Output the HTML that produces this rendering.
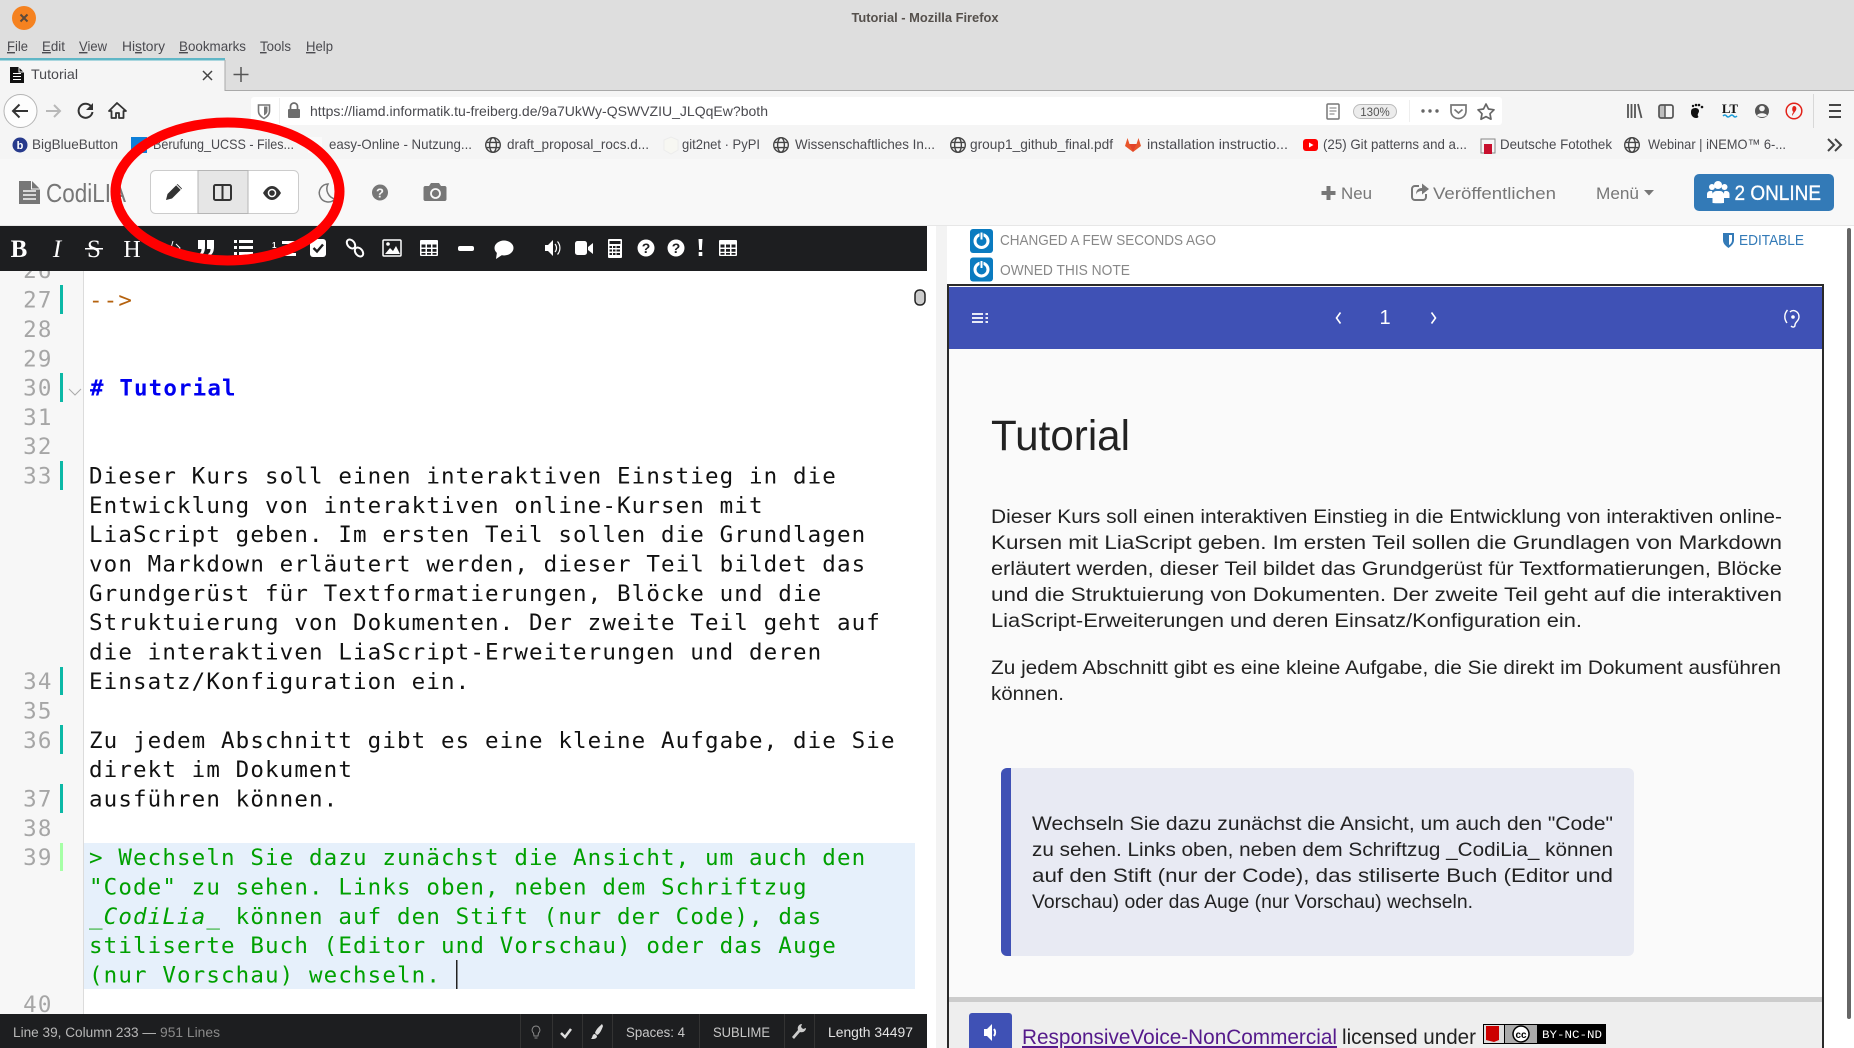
<!DOCTYPE html>
<html><head><meta charset="utf-8"><title>Tutorial - Mozilla Firefox</title>
<style>
html,body{margin:0;padding:0;background:#fff;width:1854px;height:1048px;overflow:hidden}
svg{display:block;position:absolute;left:0;top:0}
text{font-family:"Liberation Sans",sans-serif;white-space:pre}
text.serif{font-family:"Liberation Serif",serif}
text.mono{font-family:"Liberation Mono",monospace}
.ui{font-size:14px;fill:#4a4a4f}
.m{font-family:"DejaVu Sans Mono","Liberation Mono",monospace;font-size:22.5px;letter-spacing:1.12px;fill:#111}
.n{font-family:"DejaVu Sans Mono","Liberation Mono",monospace;font-size:22.5px;letter-spacing:1.12px;fill:#a6a6a6;text-anchor:end}
.p{font-size:19.5px;fill:#222}
.st{font-size:13.5px;fill:#b8b8b8}
</style></head><body>
<svg width="1854" height="1048" viewBox="0 0 1854 1048" xmlns="http://www.w3.org/2000/svg">
<defs>
<g id="globe" fill="none" stroke="#454545" stroke-width="1.4"><circle r="7.3"/><ellipse rx="3.4" ry="7.3"/><path d="M-7 -2.6H7M-7 2.6H7"/></g>
<g id="tbl" fill="#fff"><path fill-rule="evenodd" d="M-8-8H8a1 1 0 0 1 1 1V7a1 1 0 0 1-1 1H-8a1 1 0 0 1-1-1V-7a1 1 0 0 1 1-1zM-7.5-3.5v3h4v-3zm5.500 0v3h4v-3zm5.500 0v3h4v-3zM-7.5 1v2.800h4V1zm5.500 0v2.800h4V1zm5.500 0v2.800h4V1zM-7.500 5v1.800h4V5zm5.500 0v1.800h4V5zm5.500 0v1.800h4V5z"/></g>
<g id="powb"><rect x="-11.500" y="-12" width="23" height="24" rx="3" fill="#0a7bc0"/><circle r="6.500" fill="none" stroke="#fff" stroke-width="3"/><rect x="-1.500" y="-9" width="3" height="8" fill="#fff" stroke="#0a7bc0" stroke-width="1"/></g>
</defs>

<!-- browser chrome -->
<rect width="1854" height="91" fill="#dedede"/>
<rect y="90" width="1854" height="1" fill="#a9a9a9"/>
<text x="925" y="22" text-anchor="middle" textLength="147" lengthAdjust="spacingAndGlyphs" font-size="13" font-weight="700" fill="#55504c">Tutorial - Mozilla Firefox</text>
<ellipse cx="24" cy="18" rx="12" ry="12" fill="#f58220"/>
<path d="M20.500 14.500l7 7M27.500 14.500l-7 7" stroke="#5c4a3a" stroke-width="2"/>
<text class="ui" x="7" y="51" textLength="21" lengthAdjust="spacingAndGlyphs"><tspan text-decoration="underline">F</tspan>ile</text>
<text class="ui" x="42" y="51" textLength="23" lengthAdjust="spacingAndGlyphs"><tspan text-decoration="underline">E</tspan>dit</text>
<text class="ui" x="79" y="51" textLength="28" lengthAdjust="spacingAndGlyphs"><tspan text-decoration="underline">V</tspan>iew</text>
<text class="ui" x="122" y="51" textLength="43" lengthAdjust="spacingAndGlyphs">Hi<tspan text-decoration="underline">s</tspan>tory</text>
<text class="ui" x="179" y="51" textLength="67" lengthAdjust="spacingAndGlyphs"><tspan text-decoration="underline">B</tspan>ookmarks</text>
<text class="ui" x="260" y="51" textLength="31" lengthAdjust="spacingAndGlyphs"><tspan text-decoration="underline">T</tspan>ools</text>
<text class="ui" x="306" y="51" textLength="27" lengthAdjust="spacingAndGlyphs"><tspan text-decoration="underline">H</tspan>elp</text>
<!-- tab -->
<rect x="0" y="58" width="225" height="33" fill="#f5f5f5"/>
<rect x="0" y="58" width="225" height="2.500" fill="#5fb6c6"/>
<rect x="224.500" y="60" width="1" height="31" fill="#a9a9a9"/>
<path d="M10 67h8.500l5.500 5.500V83H10z" fill="#111"/><path d="M13 73.500h8M13 76.500h8M13 79.500h8" stroke="#fff" stroke-width="1"/><path d="M19 67v5h5" fill="none" stroke="#f5f5f5" stroke-width="1"/>
<text class="ui" x="31" y="79" textLength="47" lengthAdjust="spacingAndGlyphs" fill="#333">Tutorial</text>
<path d="M203 71l9 9M212 71l-9 9" stroke="#444" stroke-width="1.500"/>
<path d="M241 67v15M233.500 74.500h15" stroke="#555" stroke-width="1.500"/>
<!-- nav bar -->
<rect y="91" width="1854" height="35" fill="#f5f5f5"/>
<rect y="126" width="1854" height="33" fill="#f5f5f5"/>
<circle cx="20.500" cy="111" r="16.500" fill="#fdfdfd" stroke="#b5b5b5" stroke-width="1"/>
<path d="M28 111H13M19.500 104.500L13 111l6.500 6.500" fill="none" stroke="#333" stroke-width="2"/>
<path d="M46 111h14M54 105l6 6-6 6" fill="none" stroke="#b8b8b8" stroke-width="2"/>
<path d="M91.500 107a7 7 0 1 0 1 5" fill="none" stroke="#333" stroke-width="2"/><path d="M93 103v7h-7z" fill="#333"/>
<path d="M117 103l-8 8h2.500v7h4.500v-5h3v5h4.500v-7h2.500z" fill="none" stroke="#333" stroke-width="1.800" stroke-linejoin="round"/>
<rect x="251" y="97" width="1251" height="28" rx="3" fill="#fff"/>
<rect x="279" y="98" width="1" height="26" fill="#eee"/>
<path d="M258.500 105h11v6c0 4-3 6-5.500 7.500-2.500-1.500-5.500-3.500-5.500-7.500z" fill="none" stroke="#777" stroke-width="1.600"/><path d="M264 106.500h3.500v4.500c0 2-1.500 3.500-3.500 4.500z" fill="#777"/>
<rect x="288" y="109" width="12" height="9" rx="1" fill="#6d6d6d"/><path d="M290.500 109v-2.500a3.500 3.500 0 0 1 7 0V109" fill="none" stroke="#6d6d6d" stroke-width="1.700"/>
<text class="ui" x="310" y="116" textLength="458" lengthAdjust="spacingAndGlyphs" fill="#333">https://liamd.informatik.tu-freiberg.de/9a7UkWy-QSWVZIU_JLQqEw?both</text>
<rect x="1327" y="104" width="12" height="15" rx="1" fill="none" stroke="#777" stroke-width="1.500"/><path d="M1329.500 108h7M1329.500 111h7M1329.500 114h5" stroke="#777" stroke-width="1"/>
<rect x="1353.500" y="104.500" width="43" height="14" rx="7" fill="#ececec" stroke="#bbb"/>
<text x="1375" y="116" text-anchor="middle" font-size="11.500" fill="#555">130%</text>
<rect x="1409" y="100" width="1" height="22" fill="#eee"/>
<circle cx="1423" cy="111" r="1.700" fill="#666"/><circle cx="1430" cy="111" r="1.700" fill="#666"/><circle cx="1437" cy="111" r="1.700" fill="#666"/>
<path d="M1451 105h15v6c0 4.500-3.500 7.500-7.500 7.500s-7.500-3-7.500-7.500z" fill="none" stroke="#777" stroke-width="1.700"/><path d="M1454.500 109.500l4 3.500 4-3.500" fill="none" stroke="#777" stroke-width="1.700"/>
<path d="M1486 104l2.500 5 5.500.8-4 3.900 1 5.500-5-2.600-5 2.600 1-5.500-4-3.900 5.500-.8z" fill="none" stroke="#666" stroke-width="1.700" stroke-linejoin="round"/>
<path d="M1628 104v14M1631.500 104v14M1635 104v14M1638 104l3.500 14" stroke="#555" stroke-width="1.800" fill="none"/>
<rect x="1659" y="105" width="14" height="13" rx="2" fill="none" stroke="#555" stroke-width="1.700"/><rect x="1659" y="105" width="6" height="13" fill="#555" opacity=".35"/><path d="M1665 105v13" stroke="#555" stroke-width="1.500"/>
<path d="M1692 109c3-2 7-1 7 2 0 2-2 3-1 5 1 1 0 2-2 2-3 0-5-3-5-5s0-3 1-4z" fill="#111"/><circle cx="1693" cy="106" r="1.200" fill="#111"/><circle cx="1696" cy="105" r="1.300" fill="#111"/><circle cx="1699" cy="105" r="1.300" fill="#111"/><circle cx="1702" cy="107" r="1.300" fill="#111"/>
<text class="serif" x="1730" y="113" text-anchor="middle" font-size="13" font-weight="700" fill="#111">LT</text><path d="M1723 116q2-2 3.500 0t3.500 0 3.500 0 3.500 0" fill="none" stroke="#1a9bd7" stroke-width="1.500"/>
<circle cx="1762" cy="111" r="7" fill="#555"/><circle cx="1762" cy="108.500" r="2.800" fill="#f5f5f5"/><path d="M1757 115.500c1-3 9-3 10 0-2 2-8 2-10 0z" fill="#f5f5f5"/>
<circle cx="1794" cy="111" r="7.800" fill="none" stroke="#e2231a" stroke-width="1.500"/><path d="M1794 106c2.500 0 3 3 1.500 5s-2 3-3.500 5c0-2 .5-3 1.500-4-2-1-1.500-6 .5-6z" fill="#e2231a"/>
<rect x="1813" y="94" width="1" height="34" fill="#d8d8d8"/>
<path d="M1829 105h12M1829 111h12M1829 117h12" stroke="#444" stroke-width="2"/>
<!-- bookmarks -->
<circle cx="20" cy="145" r="7.500" fill="#273a8c"/><text x="20" y="149" text-anchor="middle" font-size="11" font-weight="700" fill="#fff">b</text>
<text class="ui" x="32" y="149" textLength="86" lengthAdjust="spacingAndGlyphs">BigBlueButton</text>
<rect x="131" y="137" width="16" height="16" fill="#0d7fd8"/>
<text class="ui" x="153" y="149" textLength="141" lengthAdjust="spacingAndGlyphs">Berufung_UCSS - Files...</text>
<rect x="308" y="137" width="14" height="16" fill="#fafafa"/>
<text class="ui" x="329" y="149" textLength="143" lengthAdjust="spacingAndGlyphs">easy-Online - Nutzung...</text>
<use href="#globe" x="493" y="145"/>
<text class="ui" x="507" y="149" textLength="142" lengthAdjust="spacingAndGlyphs">draft_proposal_rocs.d...</text>
<path d="M664 140l7-3 7 3v10l-7 4-7-4z" fill="#f7f7f2" stroke="#ececec"/>
<text class="ui" x="682" y="149" textLength="78" lengthAdjust="spacingAndGlyphs">git2net · PyPI</text>
<use href="#globe" x="781" y="145"/>
<text class="ui" x="795" y="149" textLength="140" lengthAdjust="spacingAndGlyphs">Wissenschaftliches In...</text>
<use href="#globe" x="958" y="145"/>
<text class="ui" x="970" y="149" textLength="143" lengthAdjust="spacingAndGlyphs">group1_github_final.pdf</text>
<path d="M1133 152l-8-6 2.500-8 2 6h7l2-6 2.500 8z" fill="#e8552b"/><path d="M1133 152l-3.500-8h7z" fill="#e24329"/>
<text class="ui" x="1147" y="149" textLength="141" lengthAdjust="spacingAndGlyphs">installation instructio...</text>
<rect x="1303" y="139" width="15" height="12" rx="3" fill="#f00"/><path d="M1309 142.500l4.500 2.500-4.500 2.500z" fill="#fff"/>
<text class="ui" x="1323" y="149" textLength="144" lengthAdjust="spacingAndGlyphs">(25) Git patterns and a...</text>
<rect x="1481" y="139" width="14" height="14" fill="none" stroke="#888"/><rect x="1484" y="144" width="8" height="10" fill="#c8102e"/>
<text class="ui" x="1500" y="149" textLength="112" lengthAdjust="spacingAndGlyphs">Deutsche Fotothek</text>
<use href="#globe" x="1632" y="145"/>
<text class="ui" x="1648" y="149" textLength="138" lengthAdjust="spacingAndGlyphs">Webinar | iNEMO™ 6-...</text>
<path d="M1828 139l6 6-6 6M1835 139l6 6-6 6" fill="none" stroke="#444" stroke-width="2"/>

<!-- site header -->
<rect y="159" width="1854" height="67" fill="#f8f8f8"/>
<rect y="225" width="1854" height="1" fill="#e7e7e7"/>
<path d="M19 181h13l8 8v15H19z" fill="#777"/><path d="M23 191h13M23 195h13M23 199h13" stroke="#f8f8f8" stroke-width="1.500"/><path d="M31.500 181v8h8.500" fill="none" stroke="#f8f8f8" stroke-width="1"/>
<text x="46" y="202" textLength="80" lengthAdjust="spacingAndGlyphs" font-size="26" fill="#777">CodiLIA</text>
<rect x="150.500" y="170.500" width="148" height="43" rx="5" fill="#fff" stroke="#ccc"/>
<rect x="198" y="170.500" width="50" height="43" fill="#e6e6e6" stroke="#b5b5b5"/>
<path d="M166 200l1.500-6 10-10 4.500 4.500-10 10z" fill="#333"/><path d="M176.500 185l4.500 4.500" stroke="#fff" stroke-width="1"/>
<rect x="214" y="185" width="17" height="15" rx="1.500" fill="none" stroke="#333" stroke-width="2"/><path d="M222.500 185v15" stroke="#333" stroke-width="2"/>
<path d="M263 193c3-5 6-7 9-7s6 2 9 7c-3 5-6 7-9 7s-6-2-9-7z" fill="#333"/><circle cx="272" cy="193" r="4.300" fill="#fff"/><circle cx="272" cy="193" r="2.800" fill="#333"/>
<path d="M328 184a9 9 0 1 0 7 15 10.500 10.500 0 0 1-7-15z" fill="none" stroke="#777" stroke-width="1.500"/>
<circle cx="380" cy="192.500" r="8" fill="#777"/><text x="380" y="197.500" text-anchor="middle" font-size="13" font-weight="700" fill="#f8f8f8">?</text>
<path d="M426 186h4l2-3h8l2 3h4a2 2 0 0 1 1.500 2v11a2 2 0 0 1-1.500 2h-20a2 2 0 0 1-1.500-2v-11a2 2 0 0 1 1.500-2z" fill="#777" transform="translate(-1 0)"/><circle cx="435.500" cy="193.500" r="4.500" fill="none" stroke="#f8f8f8" stroke-width="1.800"/>
<path d="M1328.500 186v14M1321.500 193h14" stroke="#777" stroke-width="4"/>
<text x="1341" y="199" textLength="31" lengthAdjust="spacingAndGlyphs" font-size="17" fill="#777">Neu</text>
<path d="M1419 186h-4a3 3 0 0 0-3 3v8a3 3 0 0 0 3 3h8a3 3 0 0 0 3-3v-3" fill="none" stroke="#777" stroke-width="2"/><path d="M1422 188v-4.500l7 5.500-7 5.500v-3.500c-3 0-5 1-6 3.500 0-4 2-6.500 6-6.500z" fill="#777"/>
<text x="1433" y="199" textLength="123" lengthAdjust="spacingAndGlyphs" font-size="17" fill="#777">Veröffentlichen</text>
<text x="1596" y="199" textLength="43" lengthAdjust="spacingAndGlyphs" font-size="17" fill="#777">Menü</text>
<path d="M1644 190h10l-5 5.500z" fill="#777"/>
<rect x="1694" y="174" width="140" height="37" rx="5" fill="#337ab7"/>
<g fill="#fff"><circle cx="1712" cy="187" r="3"/><circle cx="1718" cy="185" r="4"/><circle cx="1724.500" cy="187" r="3"/><path d="M1707 198v-4a3 3 0 0 1 3-3h2l2 7zM1729.500 198v-4a3 3 0 0 0-3-3h-2l-2 7z"/><path d="M1712.500 203v-8a4 4 0 0 1 4-4h3.500a4 4 0 0 1 4 4v8a14 3 0 0 1-11.500 0z"/></g>
<text x="1734.500" y="200" textLength="86.500" lengthAdjust="spacingAndGlyphs" font-size="21" fill="#fff" stroke="#fff" stroke-width=".3">2 ONLINE</text>

<!-- editor -->
<rect x="0" y="226" width="84" height="790" fill="#f7f7f7"/>
<rect x="83" y="226" width="1" height="790" fill="#dcdcdc"/>
<rect x="84" y="843" width="831" height="146" fill="#e6f0fb"/>
<rect x="915" y="290" width="10" height="15" rx="4.500" fill="#ccc" stroke="#222" stroke-width="1.500"/>
<g fill="#0cb8a6">
<rect x="60" y="285" width="3" height="29"/><rect x="60" y="373" width="3" height="29"/><rect x="60" y="461" width="3" height="29"/><rect x="60" y="667" width="3" height="28"/><rect x="60" y="725" width="3" height="29"/><rect x="60" y="784" width="3" height="29"/>
</g>
<rect x="60" y="843" width="3" height="28" fill="#a6ffa6"/>
<path d="M69 389l6 6 6-6" fill="none" stroke="#aaa" stroke-width="1"/>
<text class="n" x="52.500" y="278">26</text>
<text class="n" x="52.500" y="307.500">27</text>
<text class="n" x="52.500" y="337">28</text>
<text class="n" x="52.500" y="366.500">29</text>
<text class="n" x="52.500" y="395.500">30</text>
<text class="n" x="52.500" y="425">31</text>
<text class="n" x="52.500" y="454">32</text>
<text class="n" x="52.500" y="483.500">33</text>
<text class="n" x="52.500" y="689">34</text>
<text class="n" x="52.500" y="718.500">35</text>
<text class="n" x="52.500" y="748">36</text>
<text class="n" x="52.500" y="806.500">37</text>
<text class="n" x="52.500" y="836">38</text>
<text class="n" x="52.500" y="865">39</text>
<text class="n" x="52.500" y="1012">40</text>
<text class="m" x="89" y="307.500" style="fill:#b5620e">--&gt;</text>
<text class="m" x="90" y="395.500" font-weight="700" style="fill:#0000f0">#&#160;Tutorial</text>
<text class="m" x="89" y="483.500">Dieser Kurs soll einen interaktiven Einstieg in die</text>
<text class="m" x="89" y="513">Entwicklung von interaktiven online-Kursen mit</text>
<text class="m" x="89" y="542">LiaScript geben. Im ersten Teil sollen die Grundlagen</text>
<text class="m" x="89" y="571.500">von Markdown erläutert werden, dieser Teil bildet das</text>
<text class="m" x="89" y="601">Grundgerüst für Textformatierungen, Blöcke und die</text>
<text class="m" x="89" y="630">Struktuierung von Dokumenten. Der zweite Teil geht auf</text>
<text class="m" x="89" y="659.500">die interaktiven LiaScript-Erweiterungen und deren</text>
<text class="m" x="89" y="689">Einsatz/Konfiguration ein.</text>
<text class="m" x="89" y="748">Zu jedem Abschnitt gibt es eine kleine Aufgabe, die Sie</text>
<text class="m" x="89" y="777">direkt im Dokument</text>
<text class="m" x="89" y="806.500">ausführen können.</text>
<text class="m" x="89" y="865" style="fill:#00a000">&gt; Wechseln Sie dazu zunächst die Ansicht, um auch den</text>
<text class="m" x="89" y="894.500" style="fill:#00a000">"Code" zu sehen. Links oben, neben dem Schriftzug</text>
<text class="m" x="89" y="924" style="fill:#00a000">_<tspan font-style="italic">CodiLia</tspan>_ können auf den Stift (nur der Code), das</text>
<text class="m" x="89" y="953" style="fill:#00a000">stiliserte Buch (Editor und Vorschau) oder das Auge</text>
<text class="m" x="89" y="982.500" style="fill:#00a000">(nur Vorschau) wechseln.</text>
<rect x="456" y="960" width="1.500" height="29" fill="#222"/>

<!-- toolbar -->
<rect x="0" y="226" width="927" height="45" fill="#1d1e20"/>
<text class="serif" x="19" y="257" text-anchor="middle" font-weight="700" font-size="25" fill="#fff">B</text>
<text class="serif" x="57" y="257" text-anchor="middle" font-style="italic" font-size="25" fill="#fff">I</text>
<text class="serif" x="94" y="257" text-anchor="middle" font-size="25" fill="#fff">S</text><rect x="85" y="248" width="18" height="1.500" fill="#fff"/>
<text class="serif" x="132" y="257" text-anchor="middle" font-size="24" fill="#fff">H</text>
<path d="M166 244l-4 4 4 4M176 244l4 4-4 4M173 241l-4 14" fill="none" stroke="#fff" stroke-width="1"/>
<g fill="#fff">
<path d="M198 240h7v7c0 5-2 8-5 9l-1-2c2-1 2.500-3 2.500-5H198zM207 240h7v7c0 5-2 8-5 9l-1-2c2-1 2.500-3 2.500-5H207z"/>
<path d="M234 240h3v3h-3zM239 240h14v3h-14zM234 246h3v3h-3zM239 246h14v3h-14zM234 252h3v3h-3zM239 252h14v3h-14z"/>
<path d="M282 241h14v3h-14zM282 247h14v3h-14zM282 253h14v3h-14z"/><text x="272" y="248" font-size="8" font-weight="700">1</text><text x="272" y="257" font-size="8" font-weight="700">2</text>
<rect x="310" y="239" width="16" height="18" rx="3"/>
<path d="M313.500 248l3.500 3.500 6-7" fill="none" stroke="#1d1e20" stroke-width="2.400"/>
<ellipse cx="351" cy="244" rx="3.500" ry="5" fill="none" stroke="#fff" stroke-width="2" transform="rotate(-40 351 244)"/><ellipse cx="359" cy="252" rx="3.500" ry="5" fill="none" stroke="#fff" stroke-width="2" transform="rotate(-40 359 252)"/>
<rect x="383" y="240" width="18" height="16" rx="1" fill="none" stroke="#fff" stroke-width="1.500"/><path d="M385 254l5-6 3 3 3-5 4 8z"/><circle cx="388" cy="244" r="1.800"/>
<use href="#tbl" x="429" y="248"/>
<rect x="458" y="246" width="16" height="5" rx="2"/>
<ellipse cx="504" cy="248" rx="9.500" ry="7.500"/><path d="M497 252l-1 7 6-4z"/>
<path d="M545 245h3l5-5v16l-5-5h-3z"/><path d="M555 244a6 6 0 0 1 0 8M557.500 241.500a10 10 0 0 1 0 13" fill="none" stroke="#fff" stroke-width="1.200"/>
<rect x="575" y="241" width="12" height="14" rx="2.500"/><path d="M588 247l5-4v11l-5-4z"/>
<path d="M609 239h12a1 1 0 0 1 1 1v17a1 1 0 0 1-1 1h-12a1 1 0 0 1-1-1v-17a1 1 0 0 1 1-1zm.5 2v3h11v-3zm0 5v2h2.500v-2zm3.500 0v2h2.500v-2zm3.500 0v2h3.500v-2zm-7 3.500v2h2.500v-2zm3.500 0v2h2.500v-2zm3.500 0v2h3.500v-2zm-7 3.500v2h2.500v-2zm3.500 0v2h2.500v-2zm3.500 0v2h3.500v-2z" fill-rule="evenodd"/>
<circle cx="646" cy="248" r="8.500"/><circle cx="676" cy="248" r="8.500"/>
<path d="M698.500 239h4l-.7 11h-2.600zM698.700 252h3.600v4h-3.600z"/>
<use href="#tbl" x="728" y="248"/>
</g>
<text x="646" y="253" text-anchor="middle" font-size="14" font-weight="700" fill="#1d1e20">?</text>
<text x="676" y="253" text-anchor="middle" font-size="14" font-weight="700" fill="#1d1e20">?</text>

<!-- status -->
<rect x="0" y="1014" width="927" height="34" fill="#1d1e20"/>
<g fill="#333"><rect x="520" y="1014" width="1" height="34"/><rect x="552" y="1014" width="1" height="34"/><rect x="582" y="1014" width="1" height="34"/><rect x="612" y="1014" width="1" height="34"/><rect x="699" y="1014" width="1" height="34"/><rect x="784" y="1014" width="1" height="34"/><rect x="814" y="1014" width="1" height="34"/></g>
<text class="st" x="13" y="1037" textLength="143" lengthAdjust="spacingAndGlyphs">Line 39, Column 233 —</text>
<text class="st" x="160" y="1037" textLength="60" lengthAdjust="spacingAndGlyphs" style="fill:#8a8a8a">951 Lines</text>
<path d="M536 1026a4 4 0 0 0-2.500 7l.5 3h4l.5-3a4 4 0 0 0-2.500-7zM534.500 1038h3" fill="none" stroke="#888" stroke-width="1"/>
<path d="M561 1033l4 4 6-8" fill="none" stroke="#ddd" stroke-width="2.500"/>
<path d="M602 1024c-2 2-6 5-7 9l2 2c3-1 5-6 6-9zM595 1034c-3 0-2 3-4 5 3 0 6 0 6-3z" fill="#ddd"/>
<text class="st" x="626" y="1037" textLength="59" lengthAdjust="spacingAndGlyphs" style="fill:#c8c8c8">Spaces: 4</text>
<text class="st" x="713" y="1037" textLength="57" lengthAdjust="spacingAndGlyphs" style="fill:#c8c8c8">SUBLIME</text>
<path d="M802 1024c-3 0-5 3-4 6l-6 7 2 2 6-7c3 1 6-1 6-4l-3 1-2-2z" fill="#ccc"/>
<text class="st" x="828" y="1037" textLength="85" lengthAdjust="spacingAndGlyphs" style="fill:#e4e4e4">Length 34497</text>

<!-- right pane -->
<rect x="936" y="226" width="11" height="822" fill="#f3f3f3"/>
<use href="#powb" x="981.500" y="241"/>
<use href="#powb" x="981.500" y="269.500"/>
<text x="1000" y="245" textLength="216" lengthAdjust="spacingAndGlyphs" font-size="15" fill="#888">CHANGED A FEW SECONDS AGO</text>
<text x="1000" y="275" textLength="130" lengthAdjust="spacingAndGlyphs" font-size="15" fill="#888">OWNED THIS NOTE</text>
<path d="M1723 233h11v7c0 4-3 6-5.500 8-2.500-2-5.500-4-5.500-8z" fill="#337ab7"/><path d="M1729 235h3v5c0 2-1 4-3 5z" fill="#fff"/>
<text x="1739" y="245" textLength="65" lengthAdjust="spacingAndGlyphs" font-size="15" fill="#337ab7">EDITABLE</text>
<rect x="1847" y="228" width="4" height="791" rx="2" fill="#666"/>

<rect x="948" y="285" width="875" height="780" fill="#fafafa" stroke="#2a2a2a" stroke-width="2"/>
<rect x="949" y="287" width="873" height="62" fill="#3f51b5"/>
<path d="M972 314h11M972 318h11M972 322h11M985.500 314h2.500M985.500 318h2.500M985.500 322h2.500" stroke="#fff" stroke-width="1.800"/>
<path d="M1340.500 312.500L1336.500 318l4 5.500M1431.500 312.500l4 5.500-4 5.500" fill="none" stroke="#fff" stroke-width="1.600"/>
<text x="1385" y="324" text-anchor="middle" font-size="20" fill="#fff">1</text>
<path d="M1790 312c3-3 9-1 9 5 0 4-4 5-4 8 0 2-2 3-4 1" fill="none" stroke="#fff" stroke-width="1.400"/><circle cx="1793" cy="317" r="1.800" fill="#fff"/><path d="M1787.500 310c-3.500 4-3.500 9-.5 13" fill="none" stroke="#fff" stroke-width="1.400"/>

<text x="991" y="450" textLength="139" lengthAdjust="spacingAndGlyphs" font-size="43" fill="#222">Tutorial</text>
<text class="p" x="991" y="523" textLength="791" lengthAdjust="spacingAndGlyphs">Dieser Kurs soll einen interaktiven Einstieg in die Entwicklung von interaktiven online-</text>
<text class="p" x="991" y="549" textLength="791" lengthAdjust="spacingAndGlyphs">Kursen mit LiaScript geben. Im ersten Teil sollen die Grundlagen von Markdown</text>
<text class="p" x="991" y="575" textLength="791" lengthAdjust="spacingAndGlyphs">erläutert werden, dieser Teil bildet das Grundgerüst für Textformatierungen, Blöcke</text>
<text class="p" x="991" y="601" textLength="791" lengthAdjust="spacingAndGlyphs">und die Struktuierung von Dokumenten. Der zweite Teil geht auf die interaktiven</text>
<text class="p" x="991" y="627" textLength="591" lengthAdjust="spacingAndGlyphs">LiaScript-Erweiterungen und deren Einsatz/Konfiguration ein.</text>
<text class="p" x="991" y="674" textLength="790" lengthAdjust="spacingAndGlyphs">Zu jedem Abschnitt gibt es eine kleine Aufgabe, die Sie direkt im Dokument ausführen</text>
<text class="p" x="991" y="700" textLength="73" lengthAdjust="spacingAndGlyphs">können.</text>

<rect x="1001" y="768" width="633" height="188" rx="6" fill="#e8eaf3"/>
<path d="M1011 768h-4a6 6 0 0 0-6 6v176a6 6 0 0 0 6 6h4z" fill="#3f51b5"/>
<text class="p" x="1032" y="830" textLength="581" lengthAdjust="spacingAndGlyphs">Wechseln Sie dazu zunächst die Ansicht, um auch den "Code"</text>
<text class="p" x="1032" y="856" textLength="581" lengthAdjust="spacingAndGlyphs">zu sehen. Links oben, neben dem Schriftzug _CodiLia_ können</text>
<text class="p" x="1032" y="882" textLength="581" lengthAdjust="spacingAndGlyphs">auf den Stift (nur der Code), das stiliserte Buch (Editor und</text>
<text class="p" x="1032" y="908" textLength="441" lengthAdjust="spacingAndGlyphs">Vorschau) oder das Auge (nur Vorschau) wechseln.</text>

<rect x="949" y="997" width="873" height="5" fill="#ccc"/>
<rect x="949" y="1002" width="873" height="46" fill="#eee"/>
<rect x="969" y="1013" width="43" height="40" rx="3" fill="#3f51b5"/>
<path d="M984 1029h3l5-5v17l-5-5h-3z" fill="#fff"/><path d="M994 1029a6 6 0 0 1 0 7" fill="none" stroke="#fff" stroke-width="2"/>
<text x="1022" y="1044" textLength="315" lengthAdjust="spacingAndGlyphs" font-size="21" fill="#551a8b" text-decoration="underline">ResponsiveVoice-NonCommercial</text>
<text x="1342" y="1044" textLength="134" lengthAdjust="spacingAndGlyphs" font-size="21" fill="#222">licensed under</text>
<rect x="1483" y="1024" width="123" height="20" fill="#000"/>
<rect x="1484" y="1025" width="20" height="18" fill="#ddd"/>
<path d="M1486 1026h13v14l-5 2-8-2z" fill="#c00"/>
<rect x="1505" y="1025" width="32" height="18" fill="#aaa"/>
<circle cx="1521" cy="1034" r="8" fill="#fff" stroke="#000" stroke-width="1.500"/>
<text x="1521" y="1038" text-anchor="middle" font-size="10" font-weight="700" fill="#000">cc</text>
<text class="mono" x="1542" y="1038" textLength="60" lengthAdjust="spacingAndGlyphs" font-size="11" fill="#fff">BY-NC-ND</text>

<!-- red marker ring -->
<ellipse cx="227.500" cy="191.500" rx="112" ry="69" fill="none" stroke="#f00" stroke-width="10"/>
</svg>
</body></html>
